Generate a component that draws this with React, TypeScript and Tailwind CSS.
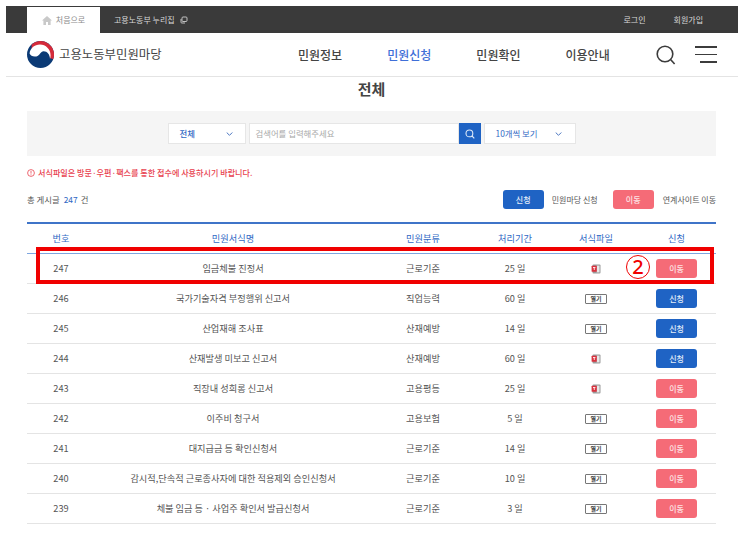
import React from "react";

const KR = { fontFamily: '"Noto Sans CJK KR", "Noto Sans", sans-serif' };

type Row = { no: number; name: string; cat: string; days: string; file: "doc" | "open"; action: "go" | "apply" };

const rows: Row[] = [
  { no: 247, name: "임금체불 진정서", cat: "근로기준", days: "25 일", file: "doc", action: "go" },
  { no: 246, name: "국가기술자격 부정행위 신고서", cat: "직업능력", days: "60 일", file: "open", action: "apply" },
  { no: 245, name: "산업재해 조사표", cat: "산재예방", days: "14 일", file: "open", action: "apply" },
  { no: 244, name: "산재발생 미보고 신고서", cat: "산재예방", days: "60 일", file: "doc", action: "apply" },
  { no: 243, name: "직장내 성희롱 신고서", cat: "고용평등", days: "25 일", file: "doc", action: "go" },
  { no: 242, name: "이주비 청구서", cat: "고용보험", days: "5 일", file: "open", action: "go" },
  { no: 241, name: "대지급금 등 확인신청서", cat: "근로기준", days: "14 일", file: "open", action: "go" },
  { no: 240, name: "감시적,단속적 근로종사자에 대한 적용제외 승인신청서", cat: "근로기준", days: "10 일", file: "open", action: "go" },
  { no: 239, name: "체불 임금 등 · 사업주 확인서 발급신청서", cat: "근로기준", days: "3 일", file: "open", action: "go" },
];

const COLS = "grid grid-cols-[68px_276px_104px_80px_82px_79px] items-center text-center";

function Btn({ kind }: { kind: "go" | "apply" }) {
  return (
    <span
      className={
        "inline-flex h-[19px] w-[41px] items-center justify-center rounded-[3px] text-[8px] font-medium " +
        (kind === "go" ? "bg-[#f56b77] text-[#fde3e5]" : "bg-[#1f63c4] text-[#e3edf9]")
      }
    >
      {kind === "go" ? "이동" : "신청"}
    </span>
  );
}

function DocIcon() {
  return (
    <svg width="10" height="10" viewBox="0 0 10 10" className="mx-auto block">
      <rect x="1.5" y="0.5" width="8" height="9" rx="1" fill="#9a9a9a" />
      <rect x="5.6" y="1.6" width="2.9" height="6.8" fill="#e8e8e8" />
      <rect x="0.6" y="1.8" width="5.2" height="6" rx="0.5" fill="#d9333f" />
      <rect x="2" y="3" width="2.4" height="1.1" fill="#ffe3e3" />
      <rect x="2.8" y="4" width="0.9" height="2" fill="#ffe3e3" />
    </svg>
  );
}

export default function App() {
  return (
    <div className="relative h-[552px] w-[743px] overflow-hidden bg-white text-[#555]" style={KR}>
      <div className="ml-[6px] w-[732px] pt-[6px]">
        {/* top bar */}
        <div className="flex h-[27px] items-stretch bg-[#3a3a3a] pl-[21px] text-[8px] text-[#d8d8d8]">
          <div className="flex w-[73px] items-center justify-center gap-[4px] border-t border-[#3a3a3a] bg-white text-[#8a8a8a]">
            <svg width="10" height="9" viewBox="0 0 10 9" fill="#c9c9c9">
              <path d="M5 0 10 4.5H8.6V9H6V6H4v3H1.4V4.5H0z" />
            </svg>
            <span>처음으로</span>
          </div>
          <div className="ml-[14px] flex items-center gap-[5px]">
            <span>고용노동부 누리집</span>
            <svg width="8" height="8" viewBox="0 0 8 8" fill="none" stroke="#cfcfcf" strokeWidth="0.9">
              <rect x="2" y="1" width="5" height="4.5" rx="1" />
              <path d="M1 3v3.2A.8.8 0 0 0 1.8 7H5" />
            </svg>
          </div>
          <div className="ml-auto flex items-center gap-[28px] pr-[35px]">
            <span>로그인</span>
            <span>회원가입</span>
          </div>
        </div>

        {/* header */}
        <div className="flex h-[44px] items-center border-b border-[#e4e4e4] pl-[21px]">
          <div className="flex w-[271px] items-center gap-[5px]">
            <svg width="27" height="27" viewBox="0 0 27 27">
              <circle cx="13.5" cy="13.5" r="13.5" fill="#0b3a75" />
              <path d="M4.6 3.4A13.5 13.5 0 0 1 26.2 18.2L23 17 C23 10 18 5.5 12 5.5 C9 5.5 6.5 6.5 4.6 8z" fill="#d52a3a" />
              <path d="M2.6 12.5C3 7.5 7.5 3.6 13 3.6C18.8 3.6 23.6 8.5 23.6 14.2C23.6 15.6 23.4 16.7 23 18C23 13.5 20 10.2 16.6 10.3C13.4 10.5 13 14.6 9.4 15.4C6.3 16 3.6 15 2.6 12.5z" fill="#ffffff" />
            </svg>
            <span className="text-[12.4px] text-[#444]">고용노동부민원마당</span>
          </div>
          <nav className="flex gap-[45px] text-[12px] font-medium text-[#444]">
            <span>민원정보</span>
            <span className="text-[#3f6fd8]">민원신청</span>
            <span>민원확인</span>
            <span>이용안내</span>
          </nav>
          <svg className="ml-[46px]" width="20" height="20" viewBox="0 0 20 20" fill="none" stroke="#3c3c3c" strokeWidth="1.6">
            <circle cx="9" cy="9" r="7.8" />
            <path d="M14.8 14.8 18.6 19" />
          </svg>
          <div className="ml-[19px] flex w-[22px] flex-col items-end gap-[6px]">
            <div className="h-[1.5px] w-[22px] bg-[#3c3c3c]" />
            <div className="h-[1.5px] w-[22px] bg-[#3c3c3c]" />
            <div className="h-[1.5px] w-[17px] bg-[#3c3c3c]" />
          </div>
        </div>

        {/* content */}
        <div className="pl-[21px] pr-[22px]">
          <h1 className="flex h-[34px] items-center justify-center pb-[9px] text-[15px] font-bold text-[#444]">전체</h1>

          <div className="flex h-[45px] items-center justify-center bg-[#f5f5f5] text-[8.4px]">
            <div className="flex h-[21px] w-[78px] items-center justify-between border border-[#e6e6e6] bg-white pl-[11px] pr-[12px] font-medium text-[#2f68c4]">
              <span>전체</span>
              <svg width="7" height="4" viewBox="0 0 7 4" fill="none" stroke="#4a76c0" strokeWidth="1">
                <path d="M.7.5 3.5 3.3 6.3.5" />
              </svg>
            </div>
            <div className="ml-[3px] flex h-[21px] w-[210px] items-center border border-[#e6e6e6] bg-white pl-[6px] text-[#a9a9a9]">
              검색어를 입력해주세요
            </div>
            <div className="flex h-[21px] w-[22px] items-center justify-center bg-[#1f63c4]">
              <svg width="10" height="10" viewBox="0 0 10 10" fill="none" stroke="#dfeaf8" strokeWidth="1.1">
                <circle cx="4.4" cy="4.4" r="3.4" />
                <path d="M7 7 9.3 9.3" />
              </svg>
            </div>
            <div className="ml-[3px] flex h-[21px] w-[92px] items-center justify-between border border-[#e6e6e6] bg-white pl-[11px] pr-[13px] text-[#2f68c4]">
              <span>10개씩 보기</span>
              <svg width="7" height="4" viewBox="0 0 7 4" fill="none" stroke="#4a76c0" strokeWidth="1">
                <path d="M.7.5 3.5 3.3 6.3.5" />
              </svg>
            </div>
          </div>

          <div className="mt-[11px] flex h-[12px] items-center gap-[3px] text-[8.1px] font-medium text-[#e8424f]">
            <svg width="8" height="8" viewBox="0 0 8 8" fill="none" stroke="#e8424f" strokeWidth="0.8">
              <circle cx="4" cy="4" r="3.4" />
              <path d="M4 2v2.6M4 5.4v.8" />
            </svg>
            <span>서식파일은 방문·우편·팩스를 통한 접수에 사용하시기 바랍니다.</span>
          </div>

          <div className="mt-[11px] flex h-[19px] items-center text-[8.4px] text-[#555]">
            <span>총 게시글</span>
            <span className="ml-[4px] text-[#2f68c4]">247</span>
            <span className="ml-[3px]">건</span>
            <div className="ml-auto flex items-center text-[8px]">
              <Btn kind="apply" />
              <span className="ml-[8px]">민원마당 신청</span>
              <span className="ml-[15px] flex">
                <Btn kind="go" />
              </span>
              <span className="ml-[9px]">연계사이트 이동</span>
            </div>
          </div>

          {/* table */}
          <div className="mt-[13px] border-t-2 border-[#3f74c8]">
            <div className={COLS + " h-[30px] border-b border-[#7ea6e0] text-[9.2px] text-[#2f68c4]"}>
              <span>번호</span>
              <span>민원서식명</span>
              <span>민원분류</span>
              <span>처리기간</span>
              <span>서식파일</span>
              <span>신청</span>
            </div>
            {rows.map((r) => (
              <div key={r.no} className={COLS + " h-[30px] border-b border-[#e4e4e4] text-[9.2px] text-[#555]"}>
                <span>{r.no}</span>
                <span>{r.name}</span>
                <span>{r.cat}</span>
                <span>{r.days}</span>
                <span className="flex justify-center">
                  {r.file === "doc" ? (
                    <DocIcon />
                  ) : (
                    <span className="flex h-[10px] w-[22px] items-center justify-center rounded-[1px] border border-[#777] text-[6px] font-bold leading-none text-[#444]">
                      열기
                    </span>
                  )}
                </span>
                <span className="flex justify-center">
                  <Btn kind={r.action} />
                </span>
              </div>
            ))}
          </div>
        </div>
      </div>

      {/* annotation overlay */}
      <div className="pointer-events-none absolute left-[36px] top-[247px] h-[37px] w-[678px] border-[4px] border-[#f00000]" />
      <div
        className="absolute left-[626px] top-[255px] flex h-[24px] w-[24px] items-center justify-center rounded-full border-[1.5px] border-[#f00000] bg-white text-[20px] font-medium leading-none text-[#f00000]"
        style={{ fontFamily: '"Noto Sans", sans-serif' }}
      >
        2
      </div>
    </div>
  );
}
